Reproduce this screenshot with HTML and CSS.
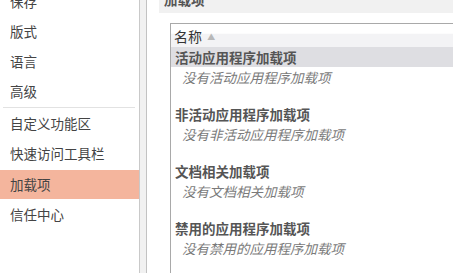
FILE: index.html
```html
<!DOCTYPE html>
<html>

<head>
    <meta http-equiv="content-type" content="text/html; charset=utf-8" />
    <title>Word 选项 - 加载项</title>
    <link rel="stylesheet" href="styles.css">
</head>

<body>
    <div class="options">
        <!-- Левое меню -->
        <ul class="nav">
            <li class="nav-item first">保存</li>
            <li class="nav-item">版式</li>
            <li class="nav-item">语言</li>
            <li class="nav-item">高级</li>
            <li class="nav-sep"></li>
            <li class="nav-item">自定义功能区</li>
            <li class="nav-item">快速访问工具栏</li>
            <li class="nav-item active">加载项</li>
            <li class="nav-item">信任中心</li>
        </ul>

        <div class="splitter"></div>

        <div class="main">
            <div class="main-title"><span>加载项</span></div>

            <div class="addin-list">
                <div class="list-head">名称 <span class="sort">▲</span></div>

                <div class="group">
                    <div class="group-title selected">活动应用程序加载项</div>
                    <div class="group-empty">没有活动应用程序加载项</div>
                </div>
                <div class="group">
                    <div class="group-title">非活动应用程序加载项</div>
                    <div class="group-empty">没有非活动应用程序加载项</div>
                </div>
                <div class="group">
                    <div class="group-title">文档相关加载项</div>
                    <div class="group-empty">没有文档相关加载项</div>
                </div>
                <div class="group">
                    <div class="group-title">禁用的应用程序加载项</div>
                    <div class="group-empty">没有禁用的应用程序加载项</div>
                </div>
            </div>
        </div>
    </div>
</body>

</html>
```

FILE: styles.css
```css
html,
body {
    margin: 0;
    padding: 0;
    background: #fff;
    overflow: hidden;
}

body {
    font-family: "Noto Sans CJK SC", "Noto Sans", sans-serif;
    color: #444;
}

.options {
    display: flex;
    height: 273px;
}

/* Left menu */
.nav {
    list-style: none;
    margin: 0;
    padding: 0;
    width: 139px;
    flex: 0 0 auto;
}

.nav-item {
    height: 30px;
    line-height: 30px;
    padding-left: 10px;
    font-size: 13.5px;
    color: #444;
}

.nav-item.first {
    margin-top: -14px;
}

.nav-item.active {
    background: #f4b59d;
    margin-top: 2px;
    height: 29px;
    line-height: 29px;
}

.nav-sep {
    height: 1px;
    margin: 1px 4px 0 3px;
    background: #e2e2e2;
}

.splitter {
    flex: 0 0 auto;
    width: 6px;
    background: #f1f1f1;
    border-left: 1px solid #c9c9c9;
    border-right: 1px solid #c2c2c2;
}

/* Content */
.main {
    flex: 1;
    display: flex;
    flex-direction: column;
    padding-left: 12px;
    min-width: 0;
}

.main-title {
    height: 13px;
    background: #f1f1f1;
    overflow: hidden;
    padding-left: 5px;
    font-size: 13.5px;
    font-weight: bold;
    color: #555;
}

.main-title span {
    display: block;
    line-height: 20px;
    margin-top: -11px;
}

.addin-list {
    margin: 10px -20px 0 11px;
    border: 1px solid #a9a9a9;
    flex: 1;
    margin-bottom: -20px;
}

.list-head {
    height: 23px;
    line-height: 24px;
    padding-left: 3px;
    font-size: 14px;
    color: #333;
    background: linear-gradient(#fff 0, #fff 40%, #f3f3f5 45%, #f3f3f5 100%);
}

.sort {
    font-size: 8px;
    color: #b8b8b8;
    vertical-align: 2px;
    margin-left: 2px;
}

.group {
    padding-bottom: 18px;
}

.group-title {
    height: 20px;
    line-height: 20px;
    padding-left: 4px;
    font-size: 13.5px;
    font-weight: bold;
    color: #555;
}

.group-title.selected {
    background: #dedee2;
}

.group-empty {
    height: 19px;
    line-height: 20px;
    padding-left: 11px;
    font-size: 13.5px;
    font-style: italic;
    color: #7a7a7a;
}
```
